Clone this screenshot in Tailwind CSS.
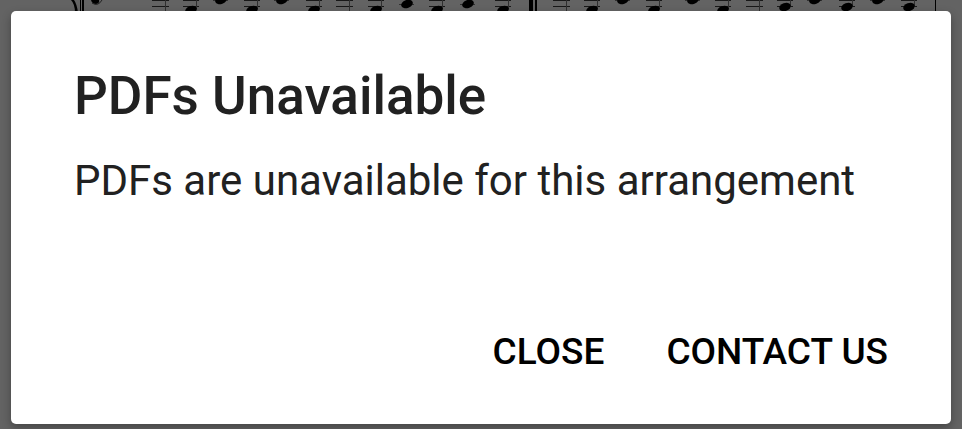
<!DOCTYPE html>
<html lang="en">
  <head>
    <meta charset="UTF-8" />
    <meta name="viewport" content="width=device-width, initial-scale=1.0" />
    <script src="https://cdn.jsdelivr.net/npm/@tailwindcss/browser@4"></script>
    <title>PDFs Unavailable</title>
  </head>
  <body
    class="relative min-h-screen overflow-hidden bg-[#636363] p-[11px] font-['Roboto',sans-serif]"
  >
    <!-- dimmed sheet music behind the dialog -->
    <div
      class="absolute inset-0 flex flex-col justify-between"
      aria-hidden="true"
    >
      <svg class="w-full" viewBox="0 0 962 14">
        <defs>
          <g id="ledger">
            <path d="M-13 .5H4M-13 6.5H4" stroke="#181818" />
            <path d="M.5 0V11" stroke="#303030" />
          </g>
          <g id="low">
            <path d="M-8 .5H8M-8 6.5H8" stroke="#181818" />
            <path d="M5.500 0V9" stroke="#303030" />
            <ellipse cy="10" rx="6" ry="4" transform="rotate(-20 0 10)" />
          </g>
          <g id="mid">
            <path d="M-8 .5H8M-8 6.5H8" stroke="#181818" />
            <path d="M5.500 0V7" stroke="#303030" />
            <ellipse cy="7" rx="6" ry="4" transform="rotate(-20 0 7)" />
          </g>
          <g id="high">
            <path d="M-8 .5H7" stroke="#303030" />
            <ellipse rx="6" ry="4" transform="rotate(-20)" />
          </g>
        </defs>
        <path d="M71 0Q75 4 75 13H78Q77 4 74 0Z" />
        <path d="M80 0h1v13h-1zM82 0h2v13h-2z" />
        <path d="M91 0q1 4 5 4q4-1 3-4z" />
        <path d="M92 3q6 4 10-3" fill="none" stroke="#222" />
        <use href="#ledger" x="165" />
        <use href="#low" x="191" />
        <use href="#high" x="221" />
        <use href="#low" x="252" />
        <use href="#high" x="282" />
        <use href="#low" x="314" />
        <use href="#ledger" x="349" />
        <use href="#low" x="376" />
        <use href="#high" x="407" y="4" />
        <use href="#low" x="437" />
        <use href="#high" x="468" y="4" />
        <use href="#low" x="503" />
        <path d="M529 0h4v13h-4zM535 0h2v13h-2z" />
        <use href="#ledger" x="566" />
        <use href="#low" x="592" />
        <use href="#high" x="623" />
        <use href="#low" x="654" />
        <use href="#high" x="693" />
        <use href="#low" x="723" />
        <use href="#ledger" x="759" />
        <use href="#mid" x="785" />
        <use href="#high" x="815" />
        <use href="#mid" x="847" />
        <use href="#high" x="878" />
        <use href="#mid" x="909" />
        <path d="M935 0h1v13h-1z" />
      </svg>
      <svg class="w-full" viewBox="0 0 962 6">
        <path d="M31 2.500H935" stroke="#222" />
        <path d="M19 0h2l2 6h-2zM30 0h2v6h-2zM49 0h3l-3 6h-4z" />
        <path
          d="M80.500 0V6M208.500 0V6M276.500 0V6M310.500 0V6M413.500 0V6M482.500 0V6M531.500 0V6M736.500 0V6"
          stroke="#222"
        />
        <path d="M482 0q5 2 6 6" fill="none" stroke="#222" />
        <path d="M506 0h1v6h-1zM935 0h1v6h-1z" />
      </svg>
    </div>

    <div
      role="alertdialog"
      aria-labelledby="title"
      aria-describedby="message"
      class="relative rounded-[5px] bg-white px-[63px] pt-[53px] pb-12 shadow-[0_4px_10px_rgba(0,0,0,0.3)]"
    >
      <h1 id="title" class="text-[53px] leading-16 font-medium text-[#212121]">
        PDFs Unavailable
      </h1>
      <p id="message" class="mt-[25px] text-[42px] leading-14 text-[#212121]">
        PDFs are unavailable for this arrangement
      </p>
      <div class="mt-[119px] flex justify-end gap-[62px]">
        <button
          type="button"
          class="text-[37px] leading-12 font-medium text-black"
        >
          CLOSE
        </button>
        <button
          type="button"
          class="text-[37px] leading-12 font-medium text-black"
        >
          CONTACT US
        </button>
      </div>
    </div>
  </body>
</html>
